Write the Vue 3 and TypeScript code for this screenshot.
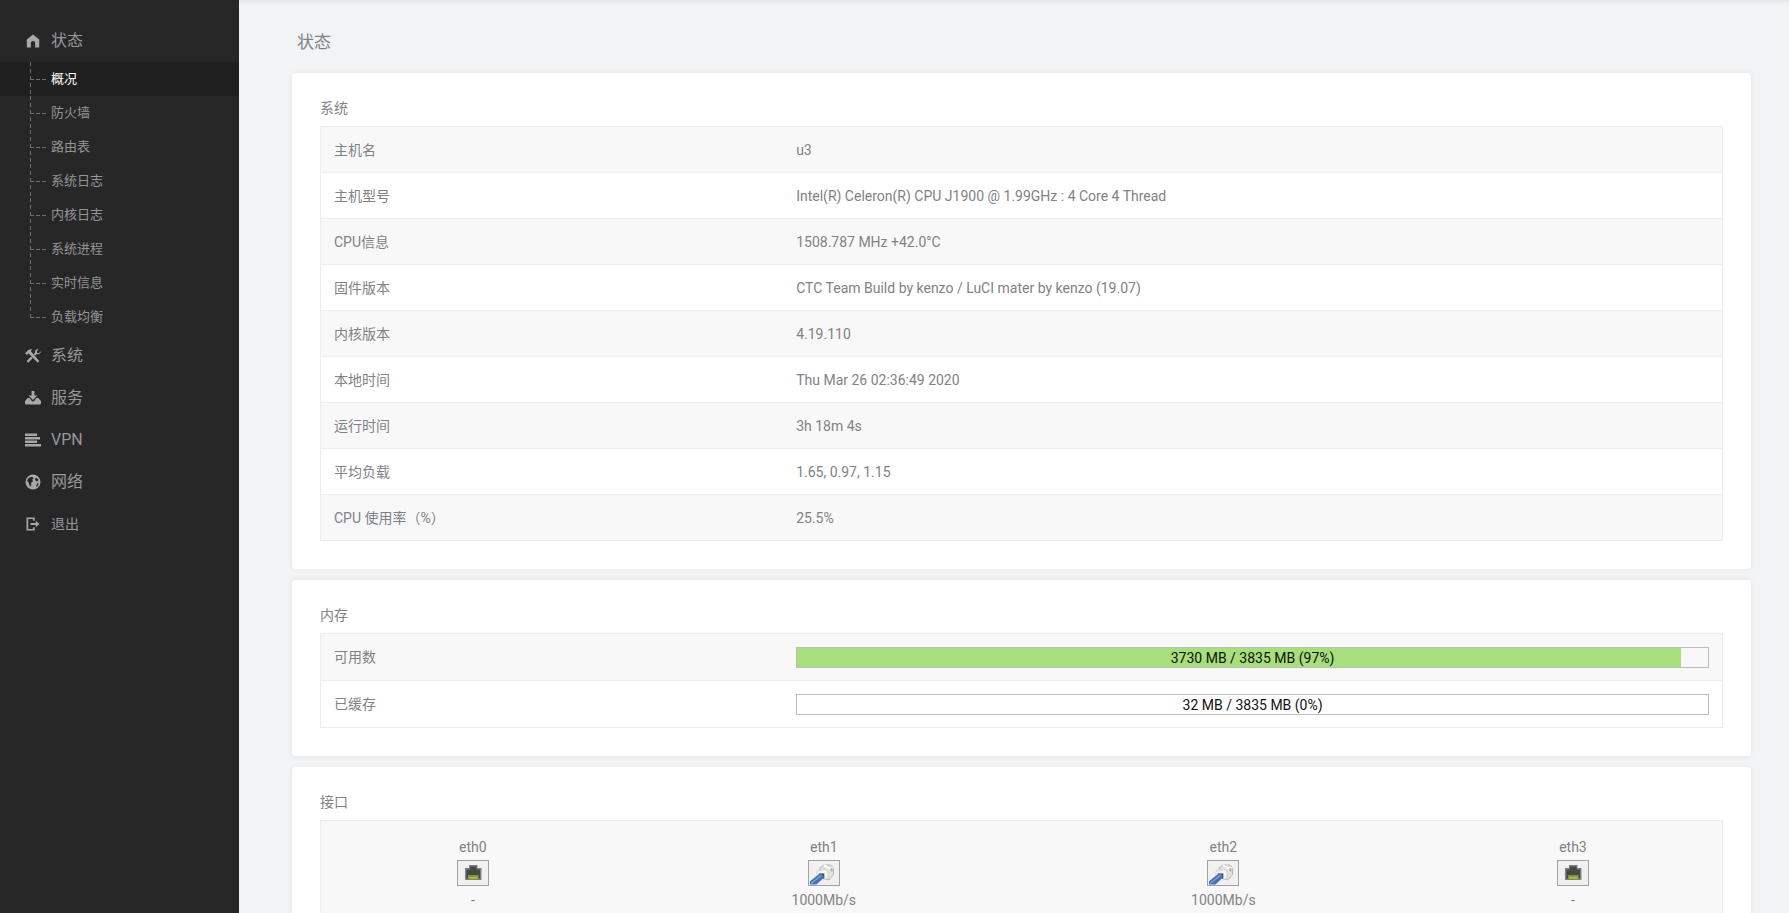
<script setup lang="ts">
interface MenuItem {
  label: string
  icon: 'home' | 'tools' | 'inbox' | 'lines' | 'globe' | 'exit'
  children?: string[]
}

interface InfoRow {
  label: string
  value: string
}

interface MemoryRow {
  id: string
  label: string
  text: string
  percent: number
}

interface Port {
  name: string
  up: boolean
  speed: string
}

const menu: MenuItem[] = [
  {
    label: '状态',
    icon: 'home',
    children: ['概况', '防火墙', '路由表', '系统日志', '内核日志', '系统进程', '实时信息', '负载均衡'],
  },
  { label: '系统', icon: 'tools' },
  { label: '服务', icon: 'inbox' },
  { label: 'VPN', icon: 'lines' },
  { label: '网络', icon: 'globe' },
  { label: '退出', icon: 'exit' },
]
const activePage = '概况'

const systemRows: InfoRow[] = [
  { label: '主机名', value: 'u3' },
  { label: '主机型号', value: 'Intel(R) Celeron(R) CPU J1900 @ 1.99GHz : 4 Core 4 Thread' },
  { label: 'CPU信息', value: '1508.787 MHz +42.0°C' },
  { label: '固件版本', value: 'CTC Team Build by kenzo / LuCI mater by kenzo (19.07)' },
  { label: '内核版本', value: '4.19.110' },
  { label: '本地时间', value: 'Thu Mar 26 02:36:49 2020' },
  { label: '运行时间', value: '3h 18m 4s' },
  { label: '平均负载', value: '1.65, 0.97, 1.15' },
  { label: 'CPU 使用率（%）', value: '25.5%' },
]

const memoryRows: MemoryRow[] = [
  { id: 'free', label: '可用数', text: '3730 MB / 3835 MB (97%)', percent: 97 },
  { id: 'cached', label: '已缓存', text: '32 MB / 3835 MB (0%)', percent: 0 },
]

const ports: Port[] = [
  { name: 'eth0', up: false, speed: '-' },
  { name: 'eth1', up: true, speed: '1000Mb/s' },
  { name: 'eth2', up: true, speed: '1000Mb/s' },
  { name: 'eth3', up: false, speed: '-' },
]
</script>

<template>
  <div class="layout">
    <nav class="sidebar">
      <ul class="menu">
        <li v-for="item in menu" :key="item.label">
          <a href="#" class="menu-link" :class="{ logout: item.icon === 'exit' }">
            <svg class="menu-icon" viewBox="0 0 16 16" aria-hidden="true">
              <path v-if="item.icon === 'home'" d="M8 1.600 1.800 6.600v7.300q0 .6.6.6h3.500V10a2.100 2.100 0 0 1 4.200 0v4.500h3.500q.6 0 .6-.6V6.600Z" />
              <g v-else-if="item.icon === 'tools'">
                <path d="M0 5.400 3 2.300C4.200 1.100 5.800.9 7.300 1.500L5.800 3l1.100 1.400 7.400 8.700-1.600 1.600-8-8.100L3.600 5.500 2 7Z" />
                <path d="M16 3.200 13.800 5.200 12.100 4.900 11.800 3.200 13.600 1C11.500.8 9.700 2.300 10 4.700L8.600 6.200 10 7.700 11.400 6.300C13.900 6.500 16 5.200 16 3.200ZM6.200 8.600 1.600 13.100 3.200 14.800 7.700 10.200Z" />
              </g>
              <path v-else-if="item.icon === 'inbox'" d="M6.600 1h2.800v4.500h3L8 9.900 3.600 5.500h3ZM2.600 8h2L6 9.800q.2 1.800 2 1.800t2-1.800L11.400 8h2L16 11.300v2q0 1.200-1.200 1.200H1.200Q0 14.500 0 13.300v-2Z" />
              <path v-else-if="item.icon === 'lines'" d="M0 1.600h12v2.400H0ZM0 5.100h15v2.400H0ZM0 8.600h12v2.400H0ZM0 12.100h16v2.400H0Z" />
              <g v-else-if="item.icon === 'globe'">
                <circle cx="8" cy="8" r="7.500" />
                <path class="cut" d="m3.200 4.600 2.300-1.700 2.600.3.400 1.500-1.300.8.800 1.700-2 1.700.4 2.300-.9 1.600-1.500-2.500-.5-2.200-1.500-1.200ZM11 3.400l2.300 2-.4 1.700-1.700.2-1.200-1.700ZM12.100 9l1.600.7-1.400 2.800-1.200.2Z" />
              </g>
              <path v-else d="M1.500 1.500h8.300v3.300H8.200V3.100h-5v9.800h5v-1.700h1.600v3.300H1.500ZM5.500 7h5.300V4.800L14.500 8l-3.700 3.200V9H5.500Z" />
            </svg>
            <span>{{ item.label }}</span>
          </a>
          <ul v-if="item.children" class="submenu">
            <li v-for="child in item.children" :key="child" :class="{ active: child === activePage }">
              <a href="#">{{ child }}</a>
            </li>
          </ul>
        </li>
      </ul>
    </nav>

    <main class="content">
      <h1>状态</h1>

      <section class="card">
        <h2>系统</h2>
        <table class="info">
          <tbody>
            <tr v-for="row in systemRows" :key="row.label">
              <th scope="row">{{ row.label }}</th>
              <td>{{ row.value }}</td>
            </tr>
          </tbody>
        </table>
      </section>

      <section class="card">
        <h2>内存</h2>
        <table class="info memory">
          <tbody>
            <tr v-for="row in memoryRows" :key="row.id">
              <th :id="row.id" scope="row">{{ row.label }}</th>
              <td>
                <div class="bar" role="progressbar" :aria-labelledby="row.id" :aria-valuenow="row.percent">
                  <div class="fill" :style="{ width: row.percent + '%' }"></div>
                  <span>{{ row.text }}</span>
                </div>
              </td>
            </tr>
          </tbody>
        </table>
      </section>

      <section class="card">
        <h2>接口</h2>
        <table class="ports">
          <colgroup>
            <col class="col-first" />
            <col class="col-second" />
            <col class="col-third" />
            <col />
          </colgroup>
          <tbody>
            <tr>
              <td v-for="port in ports" :key="port.name">
                <div>{{ port.name }}</div>
                <svg class="port" viewBox="0 0 32 26" aria-hidden="true">
                  <rect x=".5" y=".5" width="31" height="25" fill="#f0f0f0" stroke="#a2a2a2" />
                  <g v-if="port.up">
                    <path d="m12 8 4-3h6.500l3 2.500v7L21 20l-9-2.500Z" fill="#e2e3dc" stroke="#a9aaa3" stroke-width=".8" />
                    <path d="m16 5 5.500 3.500 4-1" fill="none" stroke="#fff" stroke-width="1.500" />
                    <path d="M22.500 7.500V11l2 1V8.500Z" fill="#b9b19d" />
                    <path d="m9 11 8.500-1.500 2.500 2.300v6.400l-6 2.300L9 17Z" fill="#f4f4f0" stroke="#c5c5c0" stroke-width=".6" />
                    <path d="M10.500 13.500h5.800v5.200l-3.800-.7Z" fill="#233b66" />
                    <path d="M2 24.500v-3.200l9.500-7.500 4.200 1v2.900l-7.200 6.800Z" fill="#4a70b2" />
                    <path d="m3 23.500 10.500-8.200" fill="none" stroke="#86a3d2" stroke-width="1.200" />
                  </g>
                  <g v-else>
                    <path d="M8 20V8h4V5h8.500v3h4v12Z" fill="#7b8284" />
                    <path d="M9.500 18.500V9.500H13V6.500h6.500v3H23v9Z" fill="#434a44" />
                    <path d="M11 15h10.500v4H11Z" fill="#8b9433" />
                    <path d="M12 17h8.500v1.500H12Z" fill="#b5bf4c" />
                  </g>
                </svg>
                <div>{{ port.speed }}</div>
              </td>
            </tr>
          </tbody>
        </table>
      </section>
    </main>
  </div>
</template>

<style>
html,
body {
  height: 100%;
  margin: 0;
  overflow: hidden;
}

#app {
  height: 100%;
}
</style>

<style scoped>
.layout {
  display: flex;
  height: 100%;
  font: 14px/20px Roboto, 'Noto Sans CJK SC', sans-serif;
  color: #808285;
  background: #f1f3f5;
}

.sidebar {
  flex: none;
  width: 239px;
  overflow: hidden;
  background: #272727;
}

ul {
  margin: 0;
  padding: 0;
  list-style: none;
}

.menu {
  padding-top: 20px;
}

.menu-link {
  display: flex;
  align-items: center;
  gap: 10px;
  height: 42px;
  padding-left: 25px;
  font-size: 16px;
  color: #98989b;
  text-decoration: none;
}

.menu-link.logout {
  font-size: 14px;
}

.menu-icon {
  width: 16px;
  height: 16px;
  fill: #a8a8aa;
}

.cut {
  fill: #272727;
}

.submenu {
  padding-bottom: 1px;
}

.submenu li {
  background-image:
    repeating-linear-gradient(to bottom, #6e6e6e 0 4px, transparent 4px 7px),
    repeating-linear-gradient(to right, #6e6e6e 0 4px, transparent 4px 6px);
  background-repeat: no-repeat;
  background-position: 30px 0, 30px 17px;
  background-size: 1px 100%, 16px 1px;
}

.submenu li:last-child {
  background-size: 1px 18px, 16px 1px;
}

.submenu .active {
  background-color: #202020;
}

.submenu a {
  display: block;
  padding-left: 51px;
  font-size: 13px;
  line-height: 34px;
  color: #949497;
  text-decoration: none;
}

.submenu .active a {
  color: #fff;
}

.content {
  flex: 1;
  min-width: 0;
  padding: 0 38px 0 53px;
  overflow: hidden;
  box-shadow: inset 0 4px 4px -3px #dcdee0;
}

h1 {
  margin: 0;
  padding: 30px 5px 19px;
  font-size: 17px;
  line-height: 24px;
  font-weight: 400;
}

.card {
  margin-bottom: 11px;
  padding: 23px 28px 28px;
  background: #fff;
  border-radius: 4px;
  box-shadow: 0 0 4px #e2e4e6;
}

h2 {
  margin: 0 0 6px;
  font-size: 14px;
  line-height: 24px;
  font-weight: 400;
}

table {
  width: 100%;
  table-layout: fixed;
  border: 1px solid #ececec;
  border-collapse: collapse;
}

th,
td {
  box-sizing: border-box;
  height: 46px;
  padding: 0 13px;
  font-weight: 400;
  text-align: left;
}

th {
  width: 33%;
}

tr:nth-child(odd) {
  background: #f8f8f8;
}

tr + tr > * {
  border-top: 1px solid #efefef;
}

.memory tr > * {
  height: 47px;
}

.bar {
  display: grid;
  box-sizing: border-box;
  height: 21px;
  border: 1px solid #bdbdbd;
  color: #111;
  line-height: 21px;
  text-align: center;
}

.bar > * {
  grid-area: 1 / 1;
}

.fill {
  height: 19px;
  background: #a6df7b;
}

.ports td {
  padding: 16px 0;
  text-align: center;
}

.col-first {
  width: 21.7%;
}

.col-second {
  width: 28.4%;
}

.col-third {
  width: 28.6%;
}

.port {
  display: block;
  width: 32px;
  height: 26px;
  margin: 3px auto 4px;
}
</style>
